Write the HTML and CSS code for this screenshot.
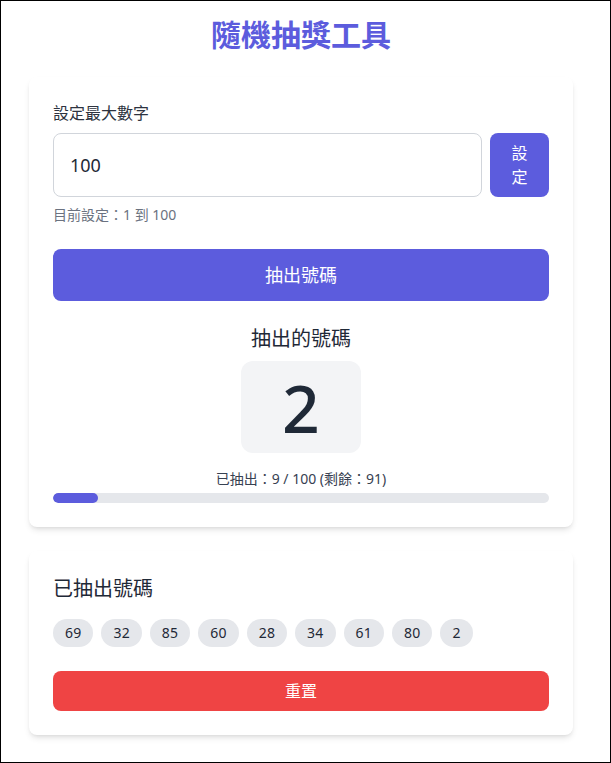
FILE: index.html
```html
<!DOCTYPE html>
<html>
    <head>
        <meta charset="utf-8">
        <title>隨機抽獎工具</title>
        <link rel="stylesheet" href="styles.css">
    </head>
    <body>
        <div class="frame">
            <div class="app">
                <h1 class="title">隨機抽獎工具</h1>

                <!--SETTINGS + DRAW-->
                <div class="card">
                    <label class="label" for="maxnum">設定最大數字</label>
                    <div class="input-row">
                        <input type="number" id="maxnum" class="num-input" value="100">
                        <button class="btn btn-set">設定</button>
                    </div>
                    <p class="hint">目前設定：1 到 100</p>

                    <button class="btn btn-draw">抽出號碼</button>

                    <div class="result">
                        <h2 class="result-title">抽出的號碼</h2>
                        <div class="result-num">2</div>
                    </div>

                    <p class="stats">已抽出：9 / 100 (剩餘：91)</p>
                    <div class="progress">
                        <div class="progress-fill" style="width: 9%;"></div>
                    </div>
                </div>

                <!--HISTORY-->
                <div class="card">
                    <h2 class="history-title">已抽出號碼</h2>
                    <div class="chips">
                        <span class="chip">69</span>
                        <span class="chip">32</span>
                        <span class="chip">85</span>
                        <span class="chip">60</span>
                        <span class="chip">28</span>
                        <span class="chip">34</span>
                        <span class="chip">61</span>
                        <span class="chip">80</span>
                        <span class="chip">2</span>
                    </div>
                    <button class="btn btn-reset">重置</button>
                </div>
            </div>
        </div>
    </body>
</html>
```

FILE: styles.css
```css
body{
    margin: 0;
    background-color: white;
    font-family: "Noto Sans", "Noto Sans CJK TC", sans-serif;
    color: #1f2937;
}

.frame{
    min-height: 100vh;
    box-sizing: border-box;
    border: 1px solid black;
    padding: 16px 9px 0 0;
}

.app{
    width: 544px;
    margin: 0 auto;
}

.title{
    margin: 0 0 24px;
    text-align: center;
    font-size: 30px;
    line-height: 36px;
    font-weight: bold;
    color: #5c5cdd;
}

.card{
    background-color: white;
    border-radius: 8px;
    box-shadow: 0 4px 6px -1px rgba(0, 0, 0, 0.1), 0 2px 4px -2px rgba(0, 0, 0, 0.1);
    padding: 24px;
    margin-bottom: 24px;
}

.card:last-child{
    margin-bottom: 0;
}

.label{
    display: block;
    margin-bottom: 8px;
    font-size: 16px;
    line-height: 24px;
    color: #2d3340;
}

.input-row{
    display: flex;
    gap: 8px;
}

.num-input{
    flex: 1;
    min-width: 0;
    border: 1px solid #d1d5db;
    border-radius: 8px;
    padding: 0 16px;
    font-family: inherit;
    font-size: 18px;
    color: #1f2937;
    -moz-appearance: textfield;
}

.num-input::-webkit-inner-spin-button,
.num-input::-webkit-outer-spin-button{
    -webkit-appearance: none;
    margin: 0;
}

.btn{
    border: none;
    border-radius: 8px;
    color: white;
    font-family: inherit;
    cursor: pointer;
}

.btn-set{
    flex: 0 0 59px;
    padding: 8px 20px;
    background-color: #5c5cdd;
    font-size: 16px;
    line-height: 24px;
}

.hint{
    margin: 8px 0 0;
    font-size: 14px;
    line-height: 20px;
    color: #6b7280;
}

.btn-draw{
    display: block;
    width: 100%;
    margin-top: 24px;
    padding: 12px;
    background-color: #5c5cdd;
    font-size: 18px;
    line-height: 28px;
}

.result{
    display: flex;
    flex-direction: column;
    align-items: center;
    margin-top: 24px;
}

.result-title{
    margin: 0 0 8px;
    font-size: 20px;
    line-height: 28px;
    font-weight: normal;
    color: #1f2937;
}

.result-num{
    min-width: 120px;
    box-sizing: border-box;
    padding: 16px;
    border-radius: 12px;
    background-color: #f3f4f6;
    text-align: center;
    font-size: 66px;
    line-height: 60px;
    font-weight: 500;
    color: #1f2937;
}

.stats{
    margin: 16px 0 0;
    text-align: center;
    font-size: 14px;
    line-height: 20px;
    color: #374151;
}

.progress{
    margin-top: 4px;
    height: 10px;
    border-radius: 999px;
    background-color: #e5e7eb;
    overflow: hidden;
}

.progress-fill{
    height: 100%;
    border-radius: 999px;
    background-color: #5c5cdd;
}

.history-title{
    margin: 0 0 16px;
    font-size: 20px;
    line-height: 28px;
    font-weight: normal;
    color: #1f2937;
}

.chips{
    display: flex;
    flex-wrap: wrap;
    gap: 8px;
}

.chip{
    padding: 4px 12px;
    border-radius: 999px;
    background-color: #e5e7eb;
    font-size: 14px;
    line-height: 20px;
    letter-spacing: 0.2px;
    color: #1f2937;
}

.btn-reset{
    display: block;
    width: 100%;
    margin-top: 24px;
    padding: 8px;
    background-color: #ef4444;
    font-size: 16px;
    line-height: 24px;
}
```
